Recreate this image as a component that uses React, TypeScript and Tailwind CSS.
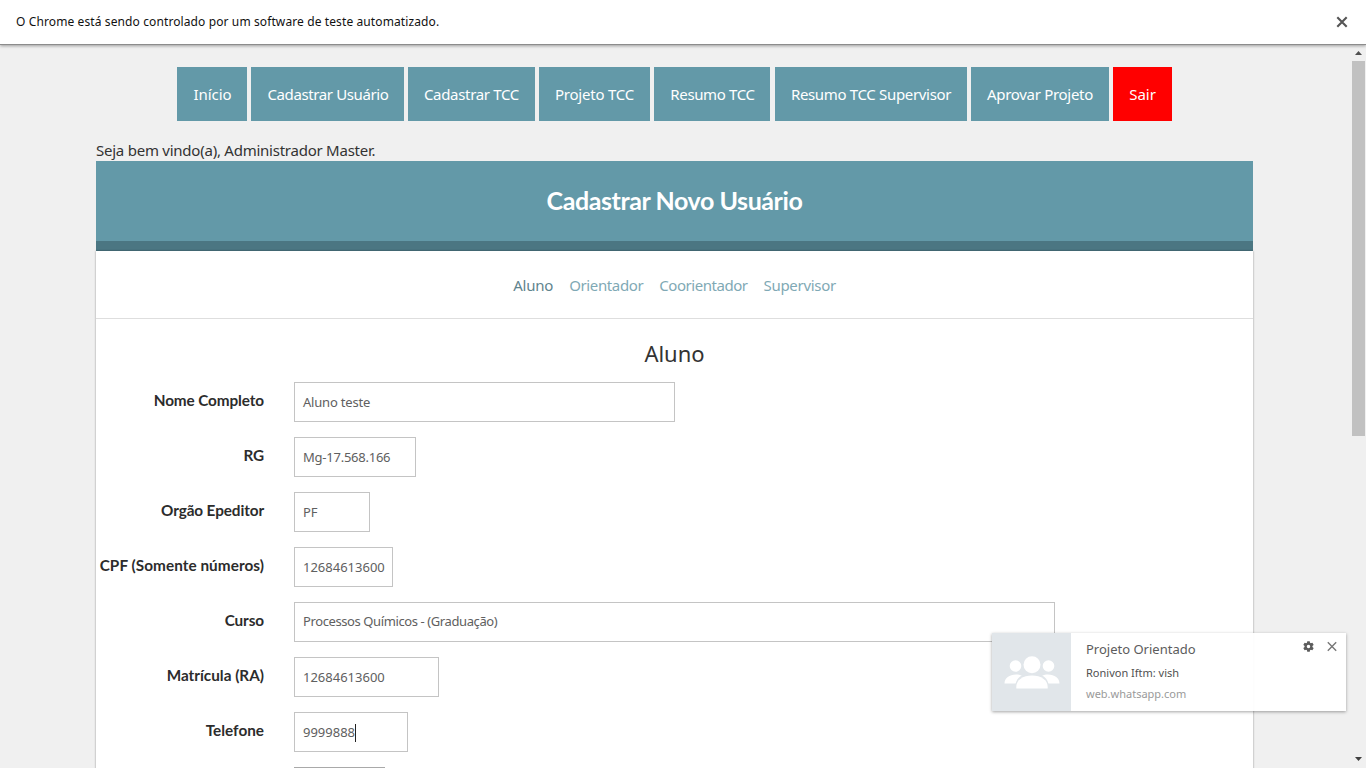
type NavItem = { label: string; className: string };
type Field = { label: string; labelClass?: string; value: string; box: string; focused?: boolean };

const navItems: NavItem[] = [
  { label: "Início", className: "w-[70px] bg-[#6399a8] pl-px tracking-[-0.1px]" },
  { label: "Cadastrar Usuário", className: "w-[153px] bg-[#6399a8] pl-px tracking-[-0.38px]" },
  { label: "Cadastrar TCC", className: "w-[127px] bg-[#6399a8] tracking-[-0.32px]" },
  { label: "Projeto TCC", className: "w-[111px] bg-[#6399a8] tracking-[-0.22px]" },
  { label: "Resumo TCC", className: "mr-px w-[116px] bg-[#6399a8] pl-px tracking-[-0.36px]" },
  { label: "Resumo TCC Supervisor", className: "w-[192px] bg-[#6399a8] tracking-[-0.33px]" },
  { label: "Aprovar Projeto", className: "w-[138px] bg-[#6399a8] tracking-[-0.3px]" },
  { label: "Sair", className: "w-[59px] bg-[#ff0000]" },
];

const fields: Field[] = [
  { label: "Nome Completo", value: "Aluno teste", box: "w-[381px] pt-[2px] tracking-[-0.2px]" },
  { label: "RG", value: "Mg-17.568.166", box: "w-[122px] pt-[2px] tracking-[-0.24px]" },
  { label: "Orgão Epeditor", value: "PF", box: "w-[76px] pt-[2px]" },
  { label: "CPF (Somente números)", labelClass: "tracking-[0.06px]", value: "12684613600", box: "w-[99px] pt-[2px]" },
  { label: "Curso", value: "Processos Químicos - (Graduação)", box: "w-[761px] tracking-[-0.4px]" },
  { label: "Matrícula (RA)", value: "12684613600", box: "w-[145px] pt-[2px]", labelClass: "tracking-[0px]" },
  { label: "Telefone", value: "9999888", box: "w-[114px] pt-[2px]", labelClass: "tracking-[0px]", focused: true },
];

function InfoBar() {
  return (
    <div className="relative z-10 flex h-[45px] shrink-0 items-center justify-between border-b border-[#8c8c8c] bg-white pl-4 pr-[18px] shadow-[0_1px_3px_rgba(0,0,0,0.35)]">
      <span className="text-[12px] tracking-[0.11px] text-[#111]">
        O Chrome está sendo controlado por um software de teste automatizado.
      </span>
      <svg width="12" height="12" viewBox="0 0 12 12" stroke="#555" strokeWidth="2.1">
        <path d="M1.3 1.3l9.4 9.4M10.7 1.3l-9.4 9.4" />
      </svg>
    </div>
  );
}

function Scrollbar() {
  return (
    <div className="flex w-[17px] shrink-0 flex-col items-center pl-px">
      <svg className="mt-[6px] shrink-0" width="7" height="4" viewBox="0 0 7 4" fill="#505050">
        <path d="M0 4L3.5 0 7 4z" />
      </svg>
      <div className="mt-[6px] h-[375px] w-[13px] shrink-0 bg-[#c1c1c1]" />
      <div className="flex-1" />
      <svg className="mb-[7px] shrink-0" width="7" height="4" viewBox="0 0 7 4" fill="#404040">
        <path d="M0 0L3.5 4 7 0z" />
      </svg>
    </div>
  );
}

function Notification() {
  return (
    <aside className="absolute left-[992px] top-[633px] z-20 flex h-[78px] w-[354px] bg-white/95 shadow-[0_1px_3px_rgba(0,0,0,0.36)]">
      <div className="flex w-[79px] shrink-0 items-center justify-center bg-[#dfe5e9]/95">
        <svg width="56" height="34" viewBox="0 0 56 34" fill="#fff">
          <circle cx="11.5" cy="11" r="5.800" />
          <circle cx="44.500" cy="11" r="5.800" />
          <path d="M.5 28.500c0-5.500 5-9 11.500-9 2.300 0 4.200.4 5.800 1.100-3.200 1.700-5.400 4.500-6.200 7.900z" />
          <path d="M55.500 28.500c0-5.500-5-9-11.500-9-2.300 0-4.200.4-5.800 1.100 3.200 1.700 5.400 4.500 6.200 7.900z" />
          <circle cx="28" cy="9.800" r="8.500" />
          <path d="M12.300 33.600v-1.600c0-7 6.500-11.500 15.700-11.500s15.700 4.500 15.700 11.500v1.600z" />
        </svg>
      </div>
      <div className="flex flex-1 flex-col pl-[15px] pt-[6px]">
        <span className="text-[13px] leading-[20px] text-[#5c5c5c]">Projeto Orientado</span>
        <span className="mt-[4px] text-[11px] leading-[20px] text-[#505050]">Ronivon Iftm: vish</span>
        <span className="mt-px text-[11px] leading-[20px] text-[#9a9a9a]">web.whatsapp.com</span>
      </div>
      <div className="flex gap-[13px] pr-[9px] pt-[8px]">
        <svg width="11" height="11" viewBox="2 2 20 20" fill="#5c5c5c">
          <path d="M19.140 12.940c.04-.3.060-.61.060-.94s-.02-.64-.07-.94l2.030-1.580a.49.49 0 0 0 .12-.61l-1.920-3.320a.49.49 0 0 0-.59-.22l-2.390.96a7 7 0 0 0-1.620-.94l-.36-2.540a.48.48 0 0 0-.48-.41h-3.840a.47.47 0 0 0-.47.410l-.36 2.540c-.59.240-1.130.57-1.620.940l-2.390-.96a.48.48 0 0 0-.59.220L2.740 8.870a.47.47 0 0 0 .12.610l2.030 1.580c-.05.300-.09.630-.09.940s.02.640.070.940l-2.030 1.580a.49.49 0 0 0-.12.610l1.920 3.320c.12.220.370.290.590.220l2.390-.96c.5.380 1.030.700 1.620.940l.36 2.540c.05.240.240.410.480.410h3.840c.24 0 .44-.17.470-.41l.36-2.540c.59-.24 1.130-.56 1.620-.94l2.390.96c.22.080.470 0 .59-.22l1.920-3.320a.47.47 0 0 0-.12-.61zM12 15.200a3.200 3.200 0 1 1 0-6.400 3.200 3.200 0 0 1 0 6.400z" />
        </svg>
        <svg width="10" height="11" viewBox="0 0 10 11" stroke="#777" strokeWidth="1.400">
          <path d="M.8 1.300l8.400 8.400M9.200 1.300L.8 9.700" />
        </svg>
      </div>
    </aside>
  );
}

export default function App() {
  return (
    <div className="relative flex h-[768px] w-[1366px] flex-col overflow-hidden bg-[#f0f0f0] font-['Noto_Sans',sans-serif] text-[#333]">
      <InfoBar />
      <div className="flex min-h-0 flex-1">
        <main className="min-w-0 flex-1 overflow-hidden pl-[96px] pr-[96px] pt-[22px]">
          <nav className="ml-[81px] flex h-[54px] gap-1 text-[15px] text-white">
            {navItems.map((item) => (
              <a key={item.label} href="#" className={`flex shrink-0 items-center justify-center whitespace-nowrap ${item.className}`}>
                {item.label}
              </a>
            ))}
          </nav>
          <p className="mt-[19px] h-[21px] text-[15px] leading-[21px] tracking-[-0.24px]">
            Seja bem vindo(a), Administrador Master.
          </p>
          <section className="w-[1157px]">
            <header className="flex h-[90px] items-center justify-center border-b-[10px] border-[#4b7682] bg-[#6399a8]">
              <h1 className="font-['Lato',sans-serif] text-[25px] font-bold tracking-[-0.42px] text-white">Cadastrar Novo Usuário</h1>
            </header>
            <div className="bg-white shadow-[0_0_2px_rgba(0,0,0,0.4)]">
              <div className="flex h-[68px] items-center justify-center gap-4 border-b border-[#dedede] pt-[2px] text-[15px] text-[#7fa9b5]">
                <a href="#" className="tracking-[-0.2px] text-[#5f848e]">Aluno</a>
                <a href="#" className="tracking-[-0.38px]">Orientador</a>
                <a href="#" className="tracking-[-0.46px]">Coorientador</a>
                <a href="#" className="tracking-[-0.3px]">Supervisor</a>
              </div>
              <h2 className="h-[63px] pt-[19px] text-center text-[22px] leading-[30px]">Aluno</h2>
              <form className="flex flex-col gap-[15px]">
                {fields.map((field) => (
                  <div key={field.label} className="flex h-10">
                    <label className={`w-[168px] pt-[7px] text-right font-['Lato',sans-serif] text-[15.300px] leading-[23px] font-bold whitespace-nowrap text-[#2c2c2c] ${field.labelClass ?? "tracking-[-0.1px]"}`}>
                      {field.label}
                    </label>
                    <div className={`ml-[30px] flex items-center border border-[#c4c4c4] pl-2 text-[13px] whitespace-nowrap text-[#606060] ${field.box}`}>
                      {field.value}
                      {field.focused && <span className="h-[18px] w-px bg-[#222]" />}
                    </div>
                  </div>
                ))}
                <div className="ml-[198px] h-10 w-[91px] border border-[#a9a9a9]" />
              </form>
            </div>
          </section>
        </main>
        <Scrollbar />
      </div>
      <Notification />
    </div>
  );
}
